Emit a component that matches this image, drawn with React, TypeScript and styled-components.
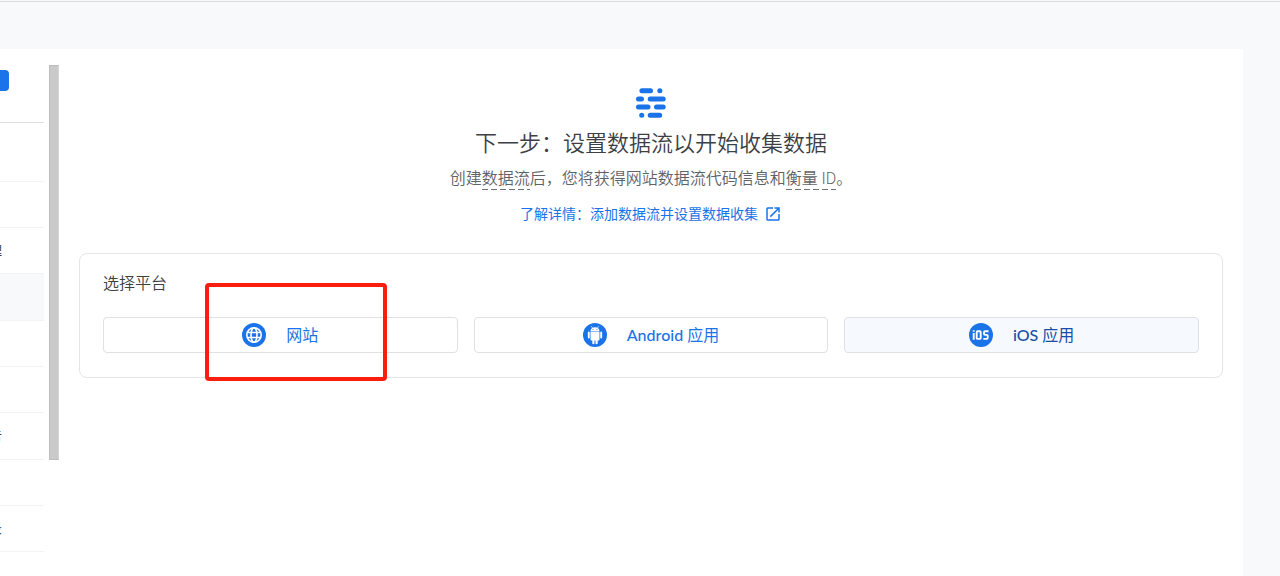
import React from 'react';
import styled, { createGlobalStyle } from 'styled-components';

const GlobalStyle = createGlobalStyle`
  *, *::before, *::after { box-sizing: border-box; }
  body {
    margin: 0;
    background: #f8f9fb;
    color: #3c4043;
    font-family: Roboto, "Noto Sans CJK SC", sans-serif;
    overflow: hidden;
  }
`;

const Page = styled.div`
  min-height: 100vh;
  padding: 47px 37px 0 0;
  display: flex;
  margin-top: 1px;
  border-top: 1px solid #dadce0;
`;

const Panel = styled.div`
  flex: 1;
  display: flex;
  background: #fff;
  min-width: 0;
`;

const Sidebar = styled.nav`
  width: 44px;
  height: calc(100vh - 49px);
  overflow: hidden;
`;

const SidebarHeader = styled.div`
  height: 74px;
  padding-top: 21px;
  border-bottom: 1px solid #dfe0e2;
`;

const CreateButton = styled.button`
  display: block;
  width: 9px;
  height: 21px;
  padding: 0;
  border: 0;
  border-radius: 0 4px 4px 0;
  background: #1a73e8;
`;

const MenuList = styled.ul`
  list-style: none;
  margin: 12px 0 0;
  padding: 0;
`;

const MenuItem = styled.li<{ $active?: boolean }>`
  height: 46px;
  display: flex;
  align-items: center;
  border-bottom: 1px solid #f1f3f4;
  background: ${(p) => (p.$active ? '#f8f9fb' : 'transparent')};
  &:nth-child(3n + 1) { height: 47px; }
`;

const MenuLabel = styled.a`
  display: flex;
  justify-content: flex-end;
  width: 2px;
  overflow: hidden;
  font-size: 13px;
  line-height: 20px;
  color: #3c4043;
  text-decoration: none;
  white-space: nowrap;
`;

const ScrollThumb = styled.div`
  width: 10px;
  height: 395px;
  margin: 16px 0 0 5px;
  background: #cacaca;
  border: 1px solid #bdbdbd;
  border-right-color: #d4d4d4;
`;

const Main = styled.main`
  flex: 1;
  min-width: 0;
  padding: 38px 20px 24px;
  display: flex;
  flex-direction: column;
`;

const Intro = styled.header`
  display: flex;
  flex-direction: column;
  align-items: center;
`;

const Title = styled.h1`
  margin: 9px 0 0;
  font-size: 22px;
  line-height: 32px;
  font-weight: 350;
  color: #3c4043;
`;

const Description = styled.p`
  margin: 7px 0 0;
  font-size: 16px;
  line-height: 24px;
  font-weight: 350;
  color: #5f6368;
`;

const Term = styled.span`
  display: inline-block;
  line-height: 22px;
  background: repeating-linear-gradient(90deg, #6f7479 0 6px, transparent 6px 9px) left bottom / 100% 1px no-repeat;
`;

const LearnMore = styled.a`
  display: flex;
  align-items: center;
  gap: 6px;
  margin-top: 13px;
  font-size: 14px;
  line-height: 20px;
  font-weight: 400;
  color: #1a73e8;
  text-decoration: none;
`;

const PlatformCard = styled.section`
  margin-top: 29px;
  padding: 18px 23px 24px;
  border: 1px solid #e3e5e8;
  border-radius: 8px;
`;

const CardTitle = styled.h2`
  margin: 0;
  font-size: 16px;
  line-height: 24px;
  font-weight: 350;
  color: #3c4043;
`;

const PlatformRow = styled.div`
  display: grid;
  grid-template-columns: repeat(3, 1fr);
  gap: 16px;
  margin-top: 21px;
`;

const PlatformButton = styled.button<{ $hovered?: boolean }>`
  display: flex;
  align-items: center;
  justify-content: center;
  gap: 20px;
  height: 36px;
  padding: 0;
  border: 1px solid #dfe1e5;
  border-radius: 4px;
  background: ${(p) => (p.$hovered ? '#f6f9fe' : '#fff')};
  color: ${(p) => (p.$hovered ? '#174ea6' : '#1a73e8')};
  font-family: Lato, "Noto Sans CJK SC", sans-serif;
  font-size: 16px;
  line-height: 24px;
  font-weight: 400;
`;

const Brand = styled.span`
  font-weight: 500;
`;

const ButtonSlot = styled.div`
  position: relative;
  display: grid;
`;

const Highlight = styled.div`
  position: absolute;
  top: -34px;
  bottom: -28px;
  left: 102px;
  width: 182px;
  border: 4px solid #fb1d0e;
  border-radius: 4px;
  pointer-events: none;
`;

const StreamIcon = () => (
  <svg width="30" height="32" viewBox="0 0 30 32" fill="none" stroke="#1a73e8" strokeWidth="5" strokeLinecap="round" aria-hidden="true">
    <path d="M5.9 5.7h8.6M23.8 5.7h.1M2.5 13.9h3M14.2 13.9h13M2.5 22.1h9.500M20.500 22.1h6.700M5.700 30.300h.1M14.200 30.300h9.500" transform="translate(0 -2)" />
  </svg>
);

const ExternalIcon = () => (
  <svg width="18" height="18" viewBox="0 0 24 24" fill="#1a73e8" aria-hidden="true">
    <path d="M19 19H5V5h7V3H5a2 2 0 0 0-2 2v14a2 2 0 0 0 2 2h14c1.100 0 2-.9 2-2v-7h-2v7zM14 3v2h3.590l-9.830 9.830 1.410 1.410L19 6.410V10h2V3h-7z" />
  </svg>
);

const GlobeIcon = () => (
  <svg width="24" height="24" viewBox="0 0 24 24" fill="none" aria-hidden="true">
    <circle cx="12" cy="12" r="12" fill="#1a73e8" />
    <g stroke="#fff" strokeWidth="1.600">
      <circle cx="12" cy="12" r="7.200" />
      <ellipse cx="12" cy="12" rx="3" ry="7.200" />
      <path d="M5.400 9.500h13.200M5.400 14.500h13.200" />
    </g>
  </svg>
);

const AndroidIcon = () => (
  <svg width="24" height="24" viewBox="0 0 24 24" aria-hidden="true">
    <circle cx="12" cy="12" r="12" fill="#1a73e8" />
    <path d="M7.500 8.600h9v7.900a.9.900 0 0 1-.9.900h-.9v2.800a1.100 1.100 0 0 1-2.200 0v-2.800h-1v2.800a1.100 1.100 0 0 1-2.200 0v-2.800h-.9a.9.900 0 0 1-.9-.9zM7.500 8a4.500 3.800 0 0 1 9 0z" fill="#fff" />
    <path d="M5.800 9.500v5M18.200 9.500v5" stroke="#fff" strokeWidth="1.900" strokeLinecap="round" />
    <path d="M9.500 5 8.600 3.500M14.500 5l.9-1.500" stroke="#fff" strokeWidth=".7" strokeLinecap="round" />
    <circle cx="10" cy="6.400" r=".5" fill="#1a73e8" />
    <circle cx="14" cy="6.400" r=".5" fill="#1a73e8" />
  </svg>
);

const IosIcon = () => (
  <svg width="24" height="24" viewBox="0 0 24 24" fill="none" aria-hidden="true">
    <circle cx="12" cy="12" r="12" fill="#1a73e8" />
    <g stroke="#fff" strokeWidth="1.900" strokeLinejoin="round">
      <path d="M4.700 10v6.800M4.700 7.200v1.600" />
      <rect x="7.700" y="8.200" width="4" height="7.700" rx="1" />
      <path d="M19.500 8.200h-3.300a1.200 1.200 0 0 0-1.200 1.200v1.300a1.200 1.200 0 0 0 1.200 1.200h1.300a1.200 1.200 0 0 1 1.200 1.200v1.600a1.200 1.200 0 0 1-1.200 1.200h-3.200" />
    </g>
  </svg>
);

const menu = [
  { label: '' },
  { label: '' },
  { label: '理' },
  { label: '', active: true },
  { label: '' },
  { label: '' },
  { label: '告' },
  { label: '' },
  { label: '录' },
  { label: '' },
];

export default function App() {
  return (
    <>
      <GlobalStyle />
      <Page>
        <Panel>
          <Sidebar>
            <SidebarHeader>
              <CreateButton type="button" aria-label="创建媒体资源" />
            </SidebarHeader>
            <MenuList>
              {menu.map((item, i) => (
                <MenuItem key={i} $active={item.active}>
                  {item.label && <MenuLabel href="#">{item.label}</MenuLabel>}
                </MenuItem>
              ))}
            </MenuList>
          </Sidebar>
          <ScrollThumb />
          <Main>
            <Intro>
              <StreamIcon />
              <Title>下一步：设置数据流以开始收集数据</Title>
              <Description>
                创建<Term>数据流</Term>后，您将获得网站数据流代码信息和<Term>衡量 ID</Term>。
              </Description>
              <LearnMore href="#">
                了解详情：添加数据流并设置数据收集
                <ExternalIcon />
              </LearnMore>
            </Intro>
            <PlatformCard>
              <CardTitle>选择平台</CardTitle>
              <PlatformRow>
                <ButtonSlot>
                  <PlatformButton type="button">
                    <GlobeIcon />
                    网站
                  </PlatformButton>
                  <Highlight />
                </ButtonSlot>
                <PlatformButton type="button">
                  <AndroidIcon />
                  <span><Brand>Android</Brand> 应用</span>
                </PlatformButton>
                <PlatformButton type="button" $hovered>
                  <IosIcon />
                  <span><Brand>iOS</Brand> 应用</span>
                </PlatformButton>
              </PlatformRow>
            </PlatformCard>
          </Main>
        </Panel>
      </Page>
    </>
  );
}
